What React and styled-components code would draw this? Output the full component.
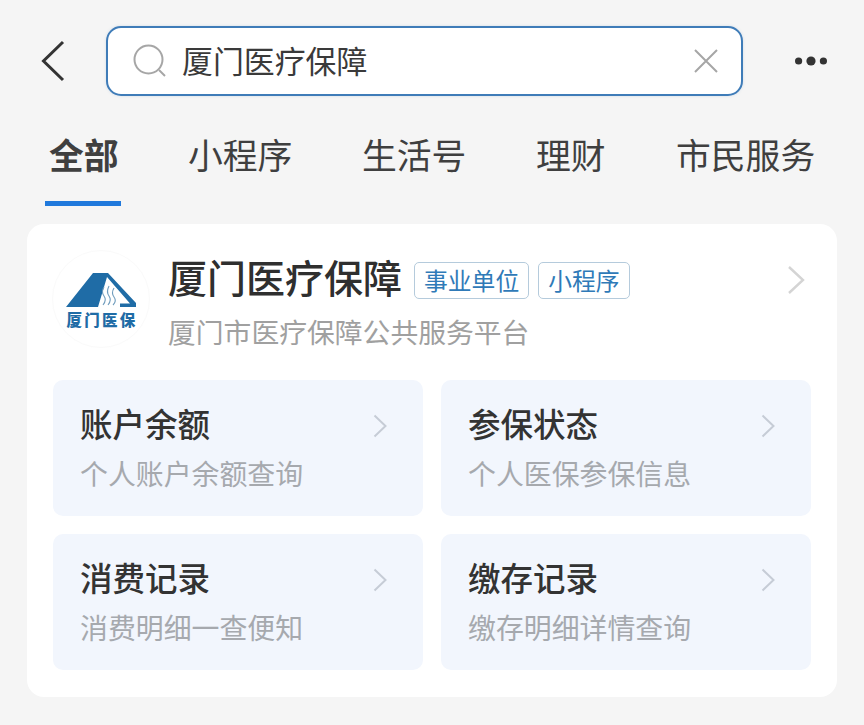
import React from "react";
import styled, { createGlobalStyle } from "styled-components";

const Global = createGlobalStyle`
  html, body { margin: 0; padding: 0; background: #f5f5f5; }
  * { box-sizing: border-box; }
  body { font-family: "Noto Sans CJK SC", "Liberation Sans", sans-serif; }
`;
const Page = styled.div`
  width: 864px; height: 725px; overflow: hidden; background: #f5f5f5;
  display: flex; flex-direction: column;
`;
const TopBar = styled.div`
  display: flex; align-items: center; height: 70px; margin-top: 26px; padding-left: 40px;
`;
const Back = styled.svg`width: 26px; height: 42px; flex: none; margin-right: 40px;`;
const Search = styled.div`
  width: 637px; height: 70px; flex: none; background: #fff; border: 2px solid #3f7cb8; border-radius: 15px;
  display: flex; align-items: center; padding: 0 23px 0 25px;
  box-shadow: 0 0 3px rgba(63,124,184,.18);
`;
const Query = styled.div`
  flex: 1; margin-left: 15px; margin-top: -2px; font-size: 30.9px; line-height: 40px; color: #3a3a3a; white-space: nowrap;
`;
const More = styled.svg`width: 32px; height: 14px; flex: none; margin-left: 52px;`;
const Tabs = styled.div`
  display: flex; height: 98px; margin-top: 12px; position: relative;
`;
const Tab = styled.div`
  position: absolute; left: ${p => p.$x}px; top: 23px;
  font-size: 34.8px; line-height: 46px; color: #3f3f3f; font-weight: ${p => p.$active ? 700 : 400}; white-space: nowrap;
`;
const Underline = styled.div`
  position: absolute; left: 45px; top: 93px; width: 76px; height: 5px; background: #2079dc;
`;
const Card = styled.div`
  width: 810px; height: 473px; margin: 18px 0 0 27px; background: #fff; border-radius: 17px; padding: 26px 26px 0 26px;
`;
const Head = styled.div`
  display: flex; height: 130px;
`;
const Logo = styled.div`
  width: 98px; height: 98px; flex: none; margin-left: -1px; border-radius: 50%; border: 1px solid #fafafa;
  display: flex; flex-direction: column; align-items: center; justify-content: flex-start; padding-top: 20px;
`;
const LogoMark = styled.svg`width: 74px; height: 38px; flex: none;`;
const LogoText = styled.div`
  font-size: 15.5px; line-height: 17px; font-weight: 900; color: #1f6ca6; letter-spacing: 2.2px; white-space: nowrap; margin: 2px 0 0 2px;
`;
const HeadBody = styled.div`
  flex: 1; margin-left: 18px; padding-top: 1px;
`;
const TitleRow = styled.div`
  display: flex; align-items: center; height: 50px;
`;
const Title = styled.div`
  font-size: 39px; line-height: 50px; font-weight: 500; color: #2f2f2f; white-space: nowrap;
`;
const Tag = styled.div`
  height: 37px; padding: 0 ${p => p.$pad}px; margin: 8px 0 0 ${p => p.$gap}px; border: 1px solid #b5cbdc; border-radius: 5px;
  font-size: 23.8px; line-height: 33px; color: #2f7ab8; white-space: nowrap; text-align: center;
`;
const Spacer = styled.div`flex: 1;`;
const HeadChevron = styled.svg`width: 18px; height: 30px; flex: none; margin: 8px 6px 0 0;`;
const Sub = styled.div`
  font-size: 27.8px; line-height: 36px; color: #a0a0a0; margin-top: 12px; white-space: nowrap;
`;
const Grid = styled.div`
  display: grid; grid-template-columns: 370px 370px; column-gap: 18px; row-gap: 18px;
`;
const Tile = styled.div`
  height: 136px; background: #f2f6fd; border-radius: 10px; padding: 22px 0 0 27px; position: relative;
`;
const TileTitle = styled.div`
  font-size: 32.5px; line-height: 42px; font-weight: 500; color: #333; white-space: nowrap;
`;
const TileSub = styled.div`
  font-size: 27.9px; line-height: 36px; color: #a6a9ae; margin-top: 11px; white-space: nowrap;
`;
const TileChevron = styled.svg`
  position: absolute; left: 320px; top: 34px; width: 14px; height: 24px;
`;

const tiles = [
  ["账户余额", "个人账户余额查询"],
  ["参保状态", "个人医保参保信息"],
  ["消费记录", "消费明细一查便知"],
  ["缴存记录", "缴存明细详情查询"],
];
const tabs = [["全部", 49, true], ["小程序", 188], ["生活号", 362], ["理财", 536], ["市民服务", 676]];

export default function App() {
  return (
    <Page>
      <Global />
      <TopBar>
        <Back viewBox="0 0 26 42" fill="none" stroke="#333" strokeWidth="3">
          <path d="M23 2 L3.5 21 L23 40" />
        </Back>
        <Search>
          <svg width="34" height="34" viewBox="0 0 34 34" fill="none" stroke="#a6a6a6" strokeWidth="2" style={{ flex: "none" }}>
            <circle cx="15.5" cy="15.5" r="14" />
            <path d="M26 26 L32 32" />
          </svg>
          <Query>厦门医疗保障</Query>
          <svg width="24" height="24" viewBox="0 0 24 24" fill="none" stroke="#a6a6a6" strokeWidth="2" style={{ flex: "none" }}>
            <path d="M1 1 L23 23 M23 1 L1 23" />
          </svg>
        </Search>
        <More viewBox="0 0 32 14" fill="#333">
          <circle cx="3.6" cy="7" r="3.6" />
          <circle cx="16" cy="7" r="4.6" />
          <circle cx="28.4" cy="7" r="3.6" />
        </More>
      </TopBar>
      <Tabs>
        {tabs.map(([t, x, a]) => <Tab key={t} $x={x} $active={a}>{t}</Tab>)}
        <Underline />
      </Tabs>
      <Card>
        <Head>
          <Logo>
            <LogoMark viewBox="64 271 74 38">
              <path fill="#1f6ca6" d="M66 307 L93 273 H108 L136 303 V307 H120 V303.5 H130 L107 277 L98 307 Z" />
              <path fill="none" stroke="#6f9cbd" strokeWidth="1.1" d="M104 287 Q101 292 104 296 Q107 300 103 305 M109 286 Q106 292 109 296 Q112 300 108 305 M114 288 Q111 293 114 297 Q117 301 113 305" />
            </LogoMark>
            <LogoText>厦门医保</LogoText>
          </Logo>
          <HeadBody>
            <TitleRow>
              <Title>厦门医疗保障</Title>
              <Tag $gap={12} $pad={9}>事业单位</Tag>
              <Tag $gap={9} $pad={9}>小程序</Tag>
              <Spacer />
              <HeadChevron viewBox="0 0 18 30" fill="none" stroke="#d4d4d4" strokeWidth="2.4">
                <path d="M2 2 L16 15 L2 28" />
              </HeadChevron>
            </TitleRow>
            <Sub>厦门市医疗保障公共服务平台</Sub>
          </HeadBody>
        </Head>
        <Grid>
          {tiles.map(([a, b]) => (
            <Tile key={a}>
              <TileTitle>{a}</TileTitle>
              <TileSub>{b}</TileSub>
              <TileChevron viewBox="0 0 14 24" fill="none" stroke="#c6ccd6" strokeWidth="2">
                <path d="M1.5 1.5 L12.5 12 L1.5 22.5" />
              </TileChevron>
            </Tile>
          ))}
        </Grid>
      </Card>
    </Page>
  );
}
